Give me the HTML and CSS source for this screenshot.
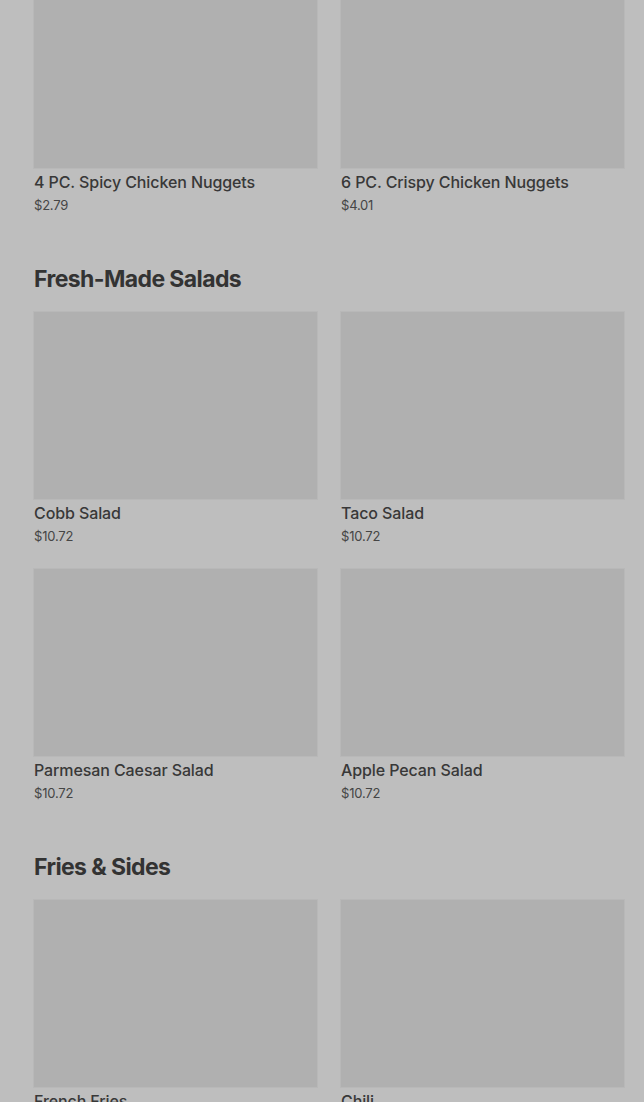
FILE: index.html
```html
<!DOCTYPE html>
<html>
	<head>
		<meta charset="UTF-8">
		<title>Menu</title>
		<link rel="stylesheet" href="styles.css">
	</head>
	<body>
		<div class="menu">
			<div class="grid">
				<div class="item">
					<div class="pic"></div>
					<div class="name">4 PC. Spicy Chicken Nuggets</div>
					<div class="price">$2.79</div>
				</div>
				<div class="item">
					<div class="pic"></div>
					<div class="name">6 PC. Crispy Chicken Nuggets</div>
					<div class="price">$4.01</div>
				</div>
			</div>

			<h2 class="cat">Fresh-Made Salads</h2>
			<div class="grid">
				<div class="item">
					<div class="pic"></div>
					<div class="name">Cobb Salad</div>
					<div class="price">$10.72</div>
				</div>
				<div class="item">
					<div class="pic"></div>
					<div class="name">Taco Salad</div>
					<div class="price">$10.72</div>
				</div>
				<div class="item">
					<div class="pic"></div>
					<div class="name">Parmesan Caesar Salad</div>
					<div class="price">$10.72</div>
				</div>
				<div class="item">
					<div class="pic"></div>
					<div class="name">Apple Pecan Salad</div>
					<div class="price">$10.72</div>
				</div>
			</div>

			<h2 class="cat">Fries &amp; Sides</h2>
			<div class="grid">
				<div class="item">
					<div class="pic"></div>
					<div class="name">French Fries</div>
					<div class="price">$2.49</div>
				</div>
				<div class="item">
					<div class="pic"></div>
					<div class="name">Chili</div>
					<div class="price">$3.99</div>
				</div>
			</div>
		</div>
	</body>
</html>
```

FILE: styles.css
```css
* {margin: 0; padding: 0; box-sizing: border-box;}
html, body {
	background: #bebebe;
	overflow: hidden;
}
body {
	font-family: Inter, "Liberation Sans", sans-serif;
	color: #333;
}
.menu {
	padding: 0 20px 0 34px;
	margin-top: -19px;
}
.grid {
	display: grid;
	grid-template-columns: 1fr 1fr;
	column-gap: 24px;
	row-gap: 23px;
}
.item .pic {
	height: 187px;
	background: #b0b0b0;
	box-shadow: 0 0 0 1px #b8b8b8;
}
.item .name {
	margin-top: 2px;
	font-size: 16px;
	line-height: 24px;
	font-weight: 500;
	letter-spacing: -0.1px;
	color: #383838;
}
.item .price {
	margin-top: 1px;
	font-size: 13px;
	line-height: 20px;
	color: #454545;
	letter-spacing: -0.2px;
}
.cat {
	margin: 48px 0 17px;
	font-size: 23px;
	line-height: 32px;
	font-weight: 700;
	letter-spacing: -0.6px;
	color: #333;
}
```
